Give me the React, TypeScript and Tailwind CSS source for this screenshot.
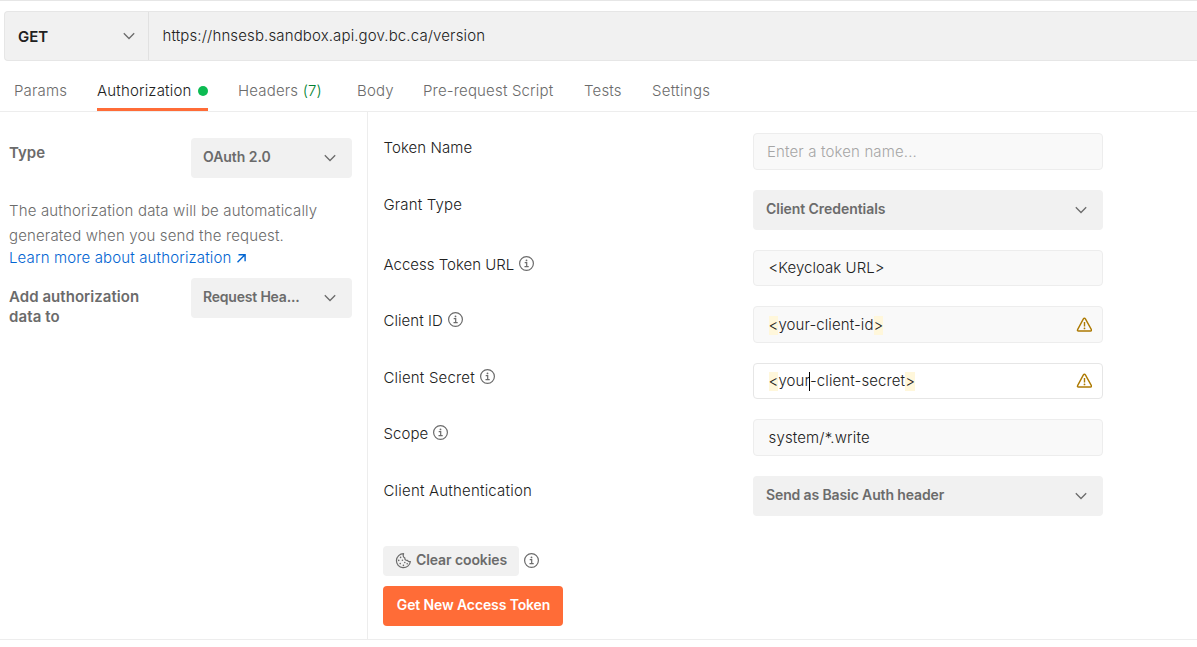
import type { ReactNode } from "react";

function Chevron({ className = "" }: { className?: string }) {
  return (
    <svg className={`h-4 w-4 shrink-0 ${className}`} viewBox="0 0 16 16" fill="none" stroke="currentColor" strokeWidth="1.3">
      <path d="M2.8 5.3 8 10.5l5.2-5.2" />
    </svg>
  );
}

function Info({ className = "" }: { className?: string }) {
  return (
    <svg className={`h-4 w-4 shrink-0 text-[#6b6b6b] ${className}`} viewBox="0 0 16 16" fill="none" stroke="currentColor" strokeWidth="1.2">
      <circle cx="7.5" cy="7.5" r="6.9" />
      <path d="M5.7 6.6h2v4M5.5 10.7h4.2" />
      <circle cx="7.5" cy="4.4" r="0.9" fill="currentColor" stroke="none" />
    </svg>
  );
}

function Warning() {
  return (
    <svg className="h-4 w-4 shrink-0 text-[#ad7a03]" viewBox="0 0 16 16" fill="none" stroke="currentColor" strokeWidth="1.4" strokeLinejoin="round">
      <path d="M7.4 1.9 1.6 12.7c-.4.8 0 1.3.8 1.3h12.200c.8 0 1.200-.5.8-1.300L9.400 1.900c-.5-.8-1.500-.8-2 0Z" />
      <path d="M8.500 5v4.500" />
      <circle cx="8.500" cy="11.400" r="0.900" fill="currentColor" stroke="none" />
    </svg>
  );
}

function Cookie() {
  return (
    <svg className="h-4 w-4 shrink-0" viewBox="0 0 16 16" fill="none" stroke="currentColor" strokeWidth="1.2" strokeLinejoin="round">
      <path d="M8.600.7A7 7 0 1 0 15.400 8.500c-1.200.4-2.500 0-3-1.200-1.600.3-2.800-.8-2.500-2.300C8.500 4.200 7.900 2.200 8.600.7Z" />
      <g fill="currentColor" stroke="none">
        <circle cx="5.600" cy="4.400" r="0.800" />
        <circle cx="3.700" cy="7.400" r="0.800" />
        <circle cx="7.400" cy="7.200" r="0.800" />
        <circle cx="5.200" cy="10.600" r="0.800" />
        <circle cx="8.400" cy="12.400" r="0.800" />
        <circle cx="9.800" cy="9.500" r="0.800" />
        <circle cx="12.200" cy="10.800" r="0.800" />
      </g>
    </svg>
  );
}

function Select({ children, className = "" }: { children: ReactNode; className?: string }) {
  return (
    <button className={`flex h-10 items-center justify-between rounded bg-[#f1f1f1] text-left text-sm font-semibold tracking-[-0.05px] text-[#6b6b6b] ${className}`}>
      <span className="pb-0.5">{children}</span>
      <Chevron />
    </button>
  );
}

function Row({ label, info, labelClass = "", children }: { label: string; info?: boolean; labelClass?: string; children: ReactNode }) {
  return (
    <div className="flex items-start">
      <div className="flex h-[30px] w-[369px] items-center gap-[5px] text-[15px] whitespace-nowrap text-[#212121]">
        <span className={`-ml-[0.5px] ${labelClass}`}>{label}</span>
        {info && <Info className="mb-0.5" />}
      </div>
      {children}
    </div>
  );
}

function Field({ children, className, warn }: { children: ReactNode; className: string; warn?: boolean }) {
  return (
    <div className={`flex w-[350px] items-center justify-between rounded border pr-2.5 text-[15px] ${className}`}>
      <div className="flex items-center whitespace-nowrap">{children}</div>
      {warn && <Warning />}
    </div>
  );
}

function Mark({ children }: { children: ReactNode }) {
  return <span className="h-[19px] bg-[#fff7db] leading-[19px]">{children}</span>;
}

export default function App() {
  return (
    <div className="flex h-[647px] w-[1197px] flex-col overflow-hidden border-t border-[#e6e6e6] bg-white font-['Inter',sans-serif] text-[15px] font-[350] text-[#212121]">
      <div className="mt-2.5 ml-1 flex h-[50px] shrink-0 rounded-l border border-r-0 border-[#e6e6e6] bg-[#f1f1f1]">
        <div className="flex w-36 items-center justify-between border-r border-[#e1e1e1] pr-[11px] pl-[13px]">
          <span className="pt-0.5 text-[15px] leading-5 font-semibold">GET</span>
          <Chevron className="text-[#6b6b6b]" />
        </div>
        <div className="flex items-center pl-[13.5px]">
          <span className="tracking-[0.13px]">https://hnsesb.sandbox.api.gov.bc.ca/version</span>
        </div>
      </div>

      <nav className="flex h-[51px] shrink-0 border-b border-[#ededed] pl-3.5 tracking-[0.17px] whitespace-nowrap text-[#6b6b6b]">
        <div className="w-[83px] pt-[19px]">Params</div>
        <div className="mr-[30px] flex w-[111px] justify-between border-b-[3px] border-[#ff6c37] pt-[19px] text-[#212121]">
          Authorization
          <span className="mt-1.5 h-2.5 w-2.5 rounded-full bg-[#0cbb52]" />
        </div>
        <div className="w-[119px] pt-[19px]">
          Headers <span className="text-[#007f31]">(7)</span>
        </div>
        <div className="w-[66px] pt-[19px]">Body</div>
        <div className="w-[161px] pt-[19px]">Pre-request Script</div>
        <div className="w-[68px] pt-[19px]">Tests</div>
        <div className="pt-[19px] tracking-[0.3px]">Settings</div>
      </nav>

      <div className="flex h-[528px] shrink-0 border-b border-[#ededed]">
        <aside className="w-[368px] shrink-0 border-r border-[#ededed] pt-[26px] pr-[15px] pl-[9px] text-[#6b6b6b]">
          <div className="flex justify-between">
            <span className="pt-1 font-semibold">Type</span>
            <Select className="w-[161px] pr-3.5 pl-3">OAuth 2.0</Select>
          </div>
          <p className="mt-5 leading-[25px] tracking-[0.17px] whitespace-nowrap">
            The authorization data will be automatically
            <br />
            <span className="tracking-[0.15px]">generated when you send the request.</span>
          </p>
          <a className="-mt-px flex h-[22px] items-center gap-[5px] tracking-[0.14px] whitespace-nowrap text-[#0265d2]">
            Learn more about authorization
            <svg className="h-3 w-3" viewBox="0 0 12 12" fill="none" stroke="currentColor" strokeWidth="1.4">
              <path d="M1.5 10.2 8.900 2.800M2.500 2.700h6.600v6.600" />
            </svg>
          </a>
          <div className="mt-[9px] flex justify-between">
            <span className="pt-[9px] leading-5 font-semibold whitespace-nowrap">
              <span className="tracking-[0.05px]">Add authorization</span>
              <br />
              <span className="tracking-[0.1px]">data to</span>
            </span>
            <Select className="w-[161px] pr-3.5 pl-3">
              <span className="tracking-[-0.2px]">Request Hea...</span>
            </Select>
          </div>
        </aside>

        <main className="flex flex-col pt-[21px] pl-4">
          <div className="flex flex-col gap-5">
            <Row label="Token Name" labelClass="tracking-[0.07px]">
              <Field className="h-[37px] border-[#ededed] bg-[#f9f9f9] pt-px pl-[13px] tracking-[0.14px] text-[#a6a6a6]">Enter a token name...</Field>
            </Row>
            <Row label="Grant Type" labelClass="tracking-[0.15px]">
              <Select className="w-[350px] pr-3.5 pl-[13px]">Client Credentials</Select>
            </Row>
            <Row label="Access Token URL" info>
              <Field className="h-9 border-[#ededed] bg-[#f9f9f9] pl-[14.5px] tracking-[0.04px]">&lt;Keycloak URL&gt;</Field>
            </Row>
            <Row label="Client ID" labelClass="tracking-[0.05px]" info>
              <Field warn className="h-[37px] border-[#ededed] bg-[#f9f9f9] pt-px pl-[14.5px] tracking-[0.1px]">
                <Mark>&lt;</Mark>your-client-id<Mark>&gt;</Mark>
              </Field>
            </Row>
            <Row label="Client Secret" labelClass="tracking-[0.18px]" info>
              <Field warn className="h-9 border-[#e6e6e6] bg-white pl-[14.5px] tracking-[0.1px]">
                <Mark>&lt;</Mark>your
                <span className="-ml-px h-[19px] w-px bg-black" />
                -client-secret<Mark>&gt;</Mark>
              </Field>
            </Row>
            <Row label="Scope" labelClass="tracking-[0.05px]" info>
              <Field className="h-[37px] border-[#ededed] bg-[#f9f9f9] pt-px pl-[14.5px] tracking-[0.15px]">system/*.write</Field>
            </Row>
            <Row label="Client Authentication" labelClass="tracking-[0.2px]">
              <Select className="w-[350px] pr-3.5 pl-[13px]">
                <span className="tracking-[-0.12px]">Send as Basic Auth header</span>
              </Select>
            </Row>
          </div>
          <div className="mt-[30px] -ml-px flex items-center gap-[5px]">
            <button className="flex h-[30px] w-[136px] items-center gap-[5px] rounded bg-[#f1f1f1] pl-3 text-sm font-semibold tracking-[-0.1px] whitespace-nowrap text-[#6b6b6b]">
              <Cookie />
              <span className="pb-0.5">Clear cookies</span>
            </button>
            <Info />
          </div>
          <button className="mt-2.5 -ml-px h-10 w-[180px] rounded bg-[#ff6c37] pb-0.5 pl-px text-sm font-semibold tracking-[-0.12px] whitespace-nowrap text-white">Get New Access Token</button>
        </main>
      </div>
    </div>
  );
}
